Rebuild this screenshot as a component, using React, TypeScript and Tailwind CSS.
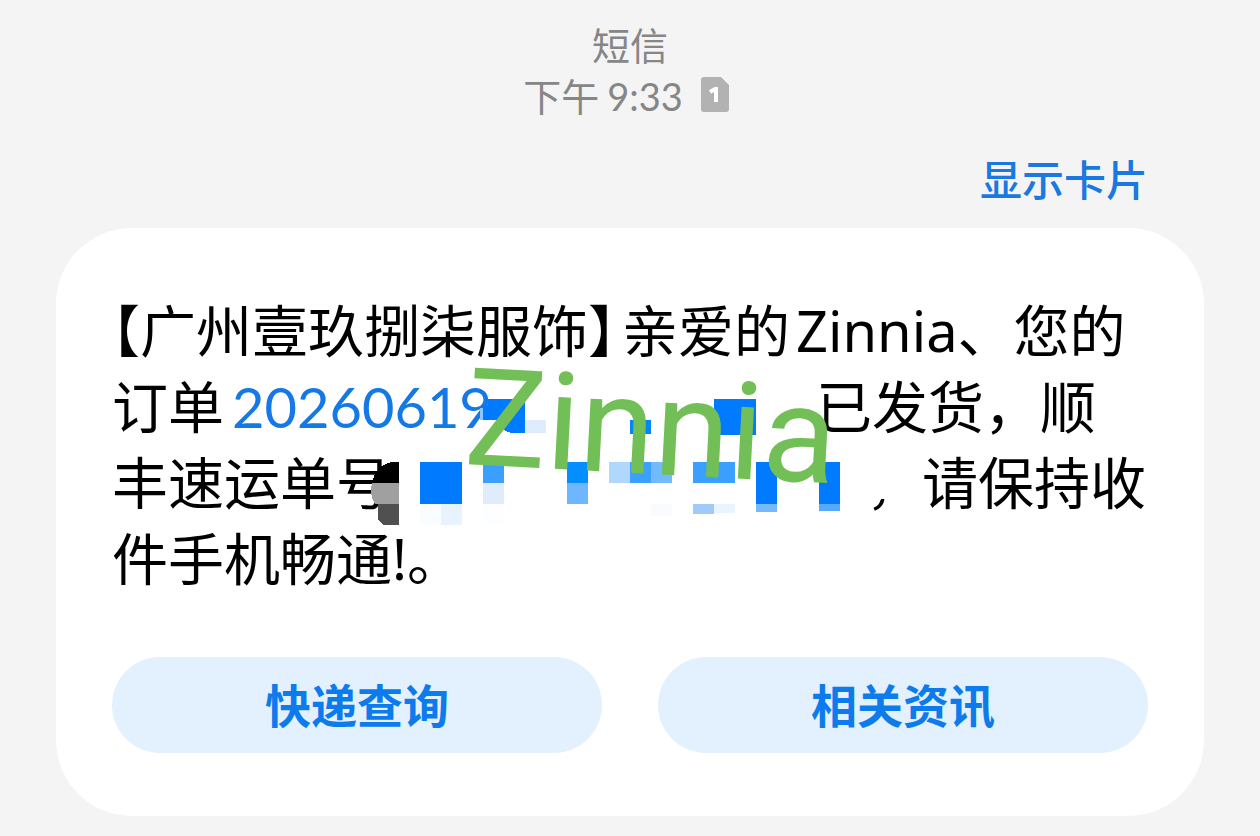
const blocks: { x: number, y: number, w: number, h: number, fill: string }[] = [
  { x: 368, y: 116, w: 3, h: 12, fill: "#8fc5f8" },
  { x: 413, y: 128, w: 21, h: 13, fill: "#deecfb" },
  { x: 518, y: 128, w: 21, h: 14, fill: "#0085fa" },
  { x: 602, y: 107, w: 42, h: 36, fill: "#007aff" },
  { x: 308, y: 170, w: 42, h: 42, fill: "#007aff" },
  { x: 308, y: 212, w: 21, h: 21, fill: "#fafdff" },
  { x: 329, y: 212, w: 21, h: 21, fill: "#e8f3ff" },
  { x: 371, y: 170, w: 21, h: 21, fill: "#3a9fff" },
  { x: 371, y: 191, w: 21, h: 21, fill: "#deecfb" },
  { x: 371, y: 212, w: 21, h: 21, fill: "#fdfeff" },
  { x: 455, y: 170, w: 21, h: 21, fill: "#058eff" },
  { x: 455, y: 191, w: 21, h: 21, fill: "#6eb7ff" },
  { x: 497, y: 170, w: 21, h: 21, fill: "#b0d8ff" },
  { x: 518, y: 170, w: 21, h: 21, fill: "#3ba0ff" },
  { x: 539, y: 170, w: 21, h: 21, fill: "#72baff" },
  { x: 539, y: 212, w: 21, h: 12, fill: "#f9fbff" },
  { x: 581, y: 170, w: 42, h: 21, fill: "#3b9fff" },
  { x: 581, y: 212, w: 21, h: 10, fill: "#9fcbfb" },
  { x: 602, y: 212, w: 21, h: 9, fill: "#eaf4ff" },
  { x: 644, y: 170, w: 21, h: 42, fill: "#007aff" },
  { x: 644, y: 212, w: 21, h: 8, fill: "#74b9f9" },
  { x: 707, y: 170, w: 21, h: 42, fill: "#007aff" },
  { x: 707, y: 212, w: 21, h: 7, fill: "#56a9fb" },
]

function SimIcon() {
  return (
    <svg className="mb-1 w-7 h-9" viewBox="0 0 28 36" role="img" aria-label="SIM 1">
      <path d="M3 0H20L28 8V32Q28 35 25 35H3Q0 35 0 32V3Q0 0 3 0Z" fill="#b2b2b2" />
      <path d="M9 15L14 12H15V25" fill="none" stroke="#fff" strokeWidth="4" />
    </svg>
  )
}

// Mosaic over the private part of the message
function Mosaic() {
  return (
    <svg className="absolute left-0 top-0" width="1036" height="304" viewBox="0 0 1036 304" shapeRendering="crispEdges" aria-hidden="true">
      {blocks.map((block) =>
        <rect key={`${block.x}-${block.y}`} x={block.x} y={block.y} width={block.w} height={block.h} fill={block.fill} />
      )}
      <path d="M376 107H413V141H403Q396 141 392 138V128H371V117L376 113Z" fill="#007aff" />
      <path d="M287 170V191H260Q262 180 270 174Q276 170 281 170Z" fill="#000" />
      <path d="M260 191H287V212H263Q257 202 260 191Z" fill="#a0a0a0" />
      <path d="M266 212H287V233H271L266 228Z" fill="#505050" />
      <path d="M754 186H776V206L769 207L763 214L754 217Z" fill="#fff" />
    </svg>
  )
}

function ActionButton({ label }: { label: string }) {
  return (
    <button type="button" className="flex-1 h-24 rounded-full bg-[#e3f1fe] text-[46px] font-bold text-[#0d7bec]">
      {label}
    </button>
  )
}

export default function App() {
  return (
    <main className="min-h-screen bg-[#f4f4f4] px-14 pt-5 pb-5 font-['Noto_Sans','Noto_Sans_CJK_SC',sans-serif]" lang="zh-CN">
      <header className="flex flex-col items-center text-[38px] leading-[51px] text-[#868686]">
        <h1>短信</h1>
        <div className="flex items-center gap-[18px] pr-2">
          <p className="flex gap-2">
            下午
            <time className="font-[Lato,sans-serif]">9:33</time>
          </p>
          <SimIcon />
        </div>
      </header>
      <div className="flex justify-end px-14 pt-8 pb-[22px]">
        <a href="#card" className="text-[42px] leading-[52px] font-medium text-[#1a78e0]">显示卡片</a>
      </div>
      <section id="card" className="rounded-[76px] bg-white px-14 pt-16 pb-[63px]">
        <div className="relative text-[56px] leading-[76px] text-black">
          <p>
            <span className="[font-feature-settings:'halt']">【</span>
            广州壹玖捌柒服饰
            <span className="mr-1.5 [font-feature-settings:'halt']">】</span>
            亲爱的
            <span className="ml-1.5">Zinnia</span>
            、您的
            <br />
            订单
            <a href="#order" className="ml-2 inline-block w-[584px] font-[Lato,sans-serif] leading-none text-[#1478e6]">20260619</a>
            已发货，顺
            <br />
            丰速运单号
            <span className="inline-block w-[474px]" />
            ，请保持收
            <br />
            件手机畅通!。
          </p>
          <Mosaic />
          <span className="absolute left-[350px] top-[58px] origin-bottom-left rotate-3 font-[Roboto,sans-serif] text-[136px] leading-none text-[#73bf57]">
            Zinnia
          </span>
        </div>
        <div className="mt-[61px] flex gap-14">
          <ActionButton label="快递查询" />
          <ActionButton label="相关资讯" />
        </div>
      </section>
    </main>
  )
}
